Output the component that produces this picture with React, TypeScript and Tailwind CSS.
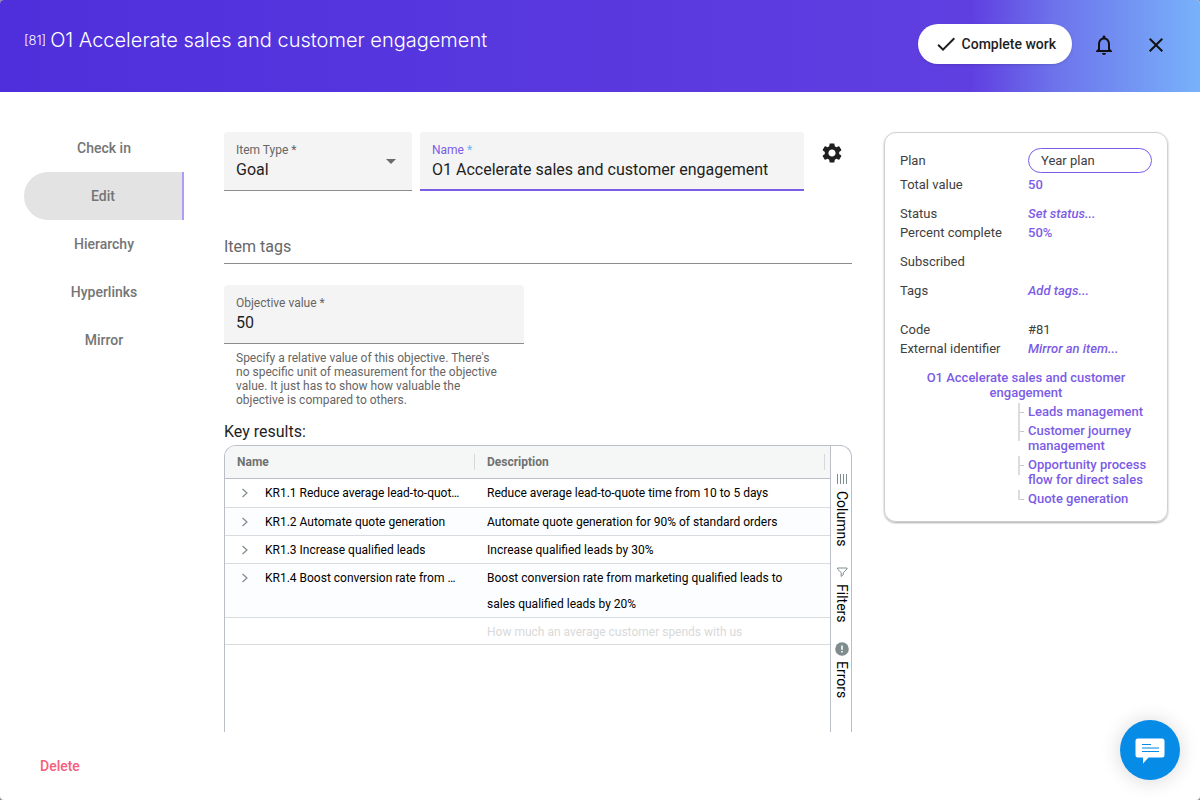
import { useState } from "react";
import type { ReactNode } from "react";
import { MdCheck, MdClose, MdNotificationsNone, MdSettings } from "react-icons/md";

const tabs = ["Check in", "Edit", "Hierarchy", "Hyperlinks", "Mirror"];

const keyResults = [
  {
    name: "KR1.1 Reduce average lead-to-quote time",
    description: "Reduce average lead-to-quote time from 10 to 5 days",
  },
  {
    name: "KR1.2 Automate quote generation",
    description: "Automate quote generation for 90% of standard orders",
  },
  {
    name: "KR1.3 Increase qualified leads",
    description: "Increase qualified leads by 30%",
  },
  {
    name: "KR1.4 Boost conversion rate from marketing",
    description:
      "Boost conversion rate from marketing qualified leads to sales qualified leads by 20%",
  },
];

const children = [
  "Leads management",
  "Customer journey management",
  "Opportunity process flow for direct sales",
  "Quote generation",
];

function Header() {
  return (
    <header className="flex h-[92px] shrink-0 items-start justify-between bg-[linear-gradient(90deg,#4e2fdb_0%,#603fe1_81%,#6d74eb_88%,#78b2fb_100%)] pl-6 pr-6 pt-6">
      <h1 className="flex items-center gap-1 font-['Inter'] text-xl font-light leading-8 text-white">
        <span className="text-[13px]">[81]</span>
        O1 Accelerate sales and customer engagement
      </h1>
      <div className="flex items-start">
        <button
          type="button"
          className="mr-3 flex h-10 items-center gap-1 rounded-full bg-white pl-4 pr-4 text-sm font-medium text-[#1f1f1f] shadow-sm"
        >
          <MdCheck className="size-6" aria-hidden="true" />
          Complete work
        </button>
        <button
          type="button"
          aria-label="Notifications"
          className="mr-3 flex h-[42px] w-10 items-center justify-center text-[#111]"
        >
          <MdNotificationsNone className="size-6" aria-hidden="true" />
        </button>
        <button
          type="button"
          aria-label="Close"
          className="flex h-[42px] w-10 items-center justify-center text-[#111]"
        >
          <MdClose className="size-6" aria-hidden="true" />
        </button>
      </div>
    </header>
  );
}

function SideNav() {
  return (
    <nav className="-mt-2 flex w-40 shrink-0 flex-col">
      {tabs.map((tab) => (
        <button
          key={tab}
          type="button"
          className={
            tab === "Edit"
              ? "h-12 rounded-l-full border-r-2 border-[#b09cf2] bg-[#e3e3e3] text-sm font-medium text-[#757575]"
              : "h-12 text-sm font-medium text-[#757575]"
          }
        >
          {tab}
        </button>
      ))}
    </nav>
  );
}

function KeyResultsTable() {
  return (
    <table className="w-full table-fixed border-collapse text-left text-xs text-black">
      <colgroup>
        <col className="w-[250px]" />
        <col className="w-[350px]" />
        <col />
      </colgroup>
      <thead>
        <tr className="h-8 border-b border-[#babfc7] bg-[#f5f7f7] text-[#6f7171]">
          <th className="p-0 font-bold">
            <div className="flex h-4 items-center border-r border-[#d5d9dc] pl-3">Name</div>
          </th>
          <th className="p-0 font-bold">
            <div className="flex h-4 items-center border-r border-[#d5d9dc] pl-3">
              Description
            </div>
          </th>
          <th className="p-0" />
        </tr>
      </thead>
      <tbody>
        {keyResults.map((row, index) => (
          <tr
            key={row.name}
            className={
              index % 2 === 1
                ? "border-b border-[#d9dcde] bg-[#fcfdfe] align-top"
                : "border-b border-[#d9dcde] align-top first:h-[29px]"
            }
          >
            <td className="p-0 pt-px">
              <div className="flex items-center pl-3 pr-3 leading-[26px]">
                <button
                  type="button"
                  aria-label="Expand row"
                  className="mr-3 flex size-4 shrink-0 items-center justify-center text-[#7f8c8d]"
                >
                  <svg viewBox="0 0 16 16" className="size-4" fill="none" stroke="currentColor" aria-hidden="true">
                    <path d="M5.5 4 10 8 5.5 12" strokeWidth="1.2" />
                  </svg>
                </button>
                <span className="truncate">{row.name}</span>
              </div>
            </td>
            <td className="px-3 pb-0 pt-px leading-[26px]">{row.description}</td>
            <td className="p-0" />
          </tr>
        ))}
        <tr className="border-b border-[#d9dcde] leading-6 text-[#d9d9d9]">
          <td className="p-0" />
          <td className="px-3 pb-0 pt-0.5">How much an average customer spends with us</td>
          <td className="p-0" />
        </tr>
      </tbody>
    </table>
  );
}

function PanelButton({ label, children }: { label: string; children: ReactNode }) {
  return (
    <button type="button" className="flex flex-col items-center gap-1">
      <span className="flex size-4 items-center justify-center text-[#7f8c8d]">{children}</span>
      <span className="text-sm leading-5 text-black [writing-mode:vertical-rl]">
        {label}
      </span>
    </button>
  );
}

function GridPanel() {
  return (
    <div className="flex w-[21px] shrink-0 flex-col items-center gap-[18px] border-l border-[#babfc7] pl-0.5 pt-[25px]">
      <PanelButton label="Columns">
        <svg viewBox="0 0 16 16" className="size-4" fill="none" stroke="currentColor" aria-hidden="true">
          <path d="M3.5 3v10M6.5 3v10M9.5 3v10M12.5 3v10" />
        </svg>
      </PanelButton>
      <PanelButton label="Filters">
        <svg viewBox="0 0 16 16" className="size-4" fill="none" stroke="currentColor" aria-hidden="true">
          <path d="M3.5 4h9.5v1L9.3 8.6v2L7.2 12.4V8.6L3.5 5z" />
        </svg>
      </PanelButton>
      <PanelButton label="Errors">
        <svg viewBox="0 0 16 16" className="size-4" aria-hidden="true">
          <circle cx="8" cy="8" r="6.8" fill="currentColor" />
          <path d="M8 4.5v4.3M8 10v1.6" stroke="#fff" strokeWidth="1.6" />
        </svg>
      </PanelButton>
    </div>
  );
}

function EditForm() {
  const [name, setName] = useState("O1 Accelerate sales and customer engagement");
  const [value, setValue] = useState("50");
  return (
    <form className="flex min-w-0 flex-1 flex-col text-[#1f1f1f]">
      <div className="flex gap-2">
        <div className="grid w-[188px] shrink-0 rounded-t border-b border-[#8c8c8c] bg-[#f4f4f4]">
          <label
            htmlFor="item-type"
            className="col-start-1 row-start-1 self-start px-3 pt-2.5 text-xs text-[#666]"
          >
            Item Type *
          </label>
          <select
            id="item-type"
            className="col-start-1 row-start-1 h-[58px] w-full appearance-none bg-transparent pb-2 pl-3 pt-[26px] text-base leading-6 outline-none"
          >
            <option>Goal</option>
          </select>
          <svg
            viewBox="0 0 10 5"
            className="pointer-events-none col-start-1 row-start-1 mr-4 h-[5px] w-2.5 self-center justify-self-end"
            aria-hidden="true"
          >
            <path d="M0 0h10L5 5z" fill="#6b6b6b" />
          </svg>
        </div>
        <div className="flex h-[59px] min-w-0 flex-1 flex-col rounded-t border-b-2 border-[#7c5ce6] bg-[#f4f4f4] px-3 pt-2.5">
          <label htmlFor="item-name" className="text-xs text-[#7c5ce6]">
            Name <span className="text-[#6fb1f5]">*</span>
          </label>
          <input
            id="item-name"
            value={name}
            onChange={(event) => setName(event.target.value)}
            className="h-6 w-full bg-transparent text-base outline-none"
          />
        </div>
        <button
          type="button"
          aria-label="Settings"
          className="mt-px flex size-10 shrink-0 items-center justify-center"
        >
          <MdSettings className="size-6" aria-hidden="true" />
        </button>
      </div>

      <input
        aria-label="Item tags"
        placeholder="Item tags"
        className="mt-[39px] h-[34px] w-full shrink-0 border-b border-[#8c8c8c] text-base outline-none placeholder:text-[#666]"
      />

      <div className="mt-[21px] flex h-[59px] w-[300px] shrink-0 flex-col rounded-t border-b border-[#8c8c8c] bg-[#f4f4f4] px-3 pt-2.5">
        <label htmlFor="objective-value" className="text-xs text-[#666]">
          Objective value *
        </label>
        <input
          id="objective-value"
          value={value}
          onChange={(event) => setValue(event.target.value)}
          className="h-6 w-full bg-transparent text-base outline-none"
        />
      </div>
      <p className="mt-[7px] w-[300px] pl-3 pr-5 text-xs leading-[14px] text-[#666]">
        Specify a relative value of this objective. There's no specific unit of measurement for the
        objective value. It just has to show how valuable the objective is compared to others.
      </p>

      <h2 className="mt-[13px] text-base leading-6">Key results:</h2>
      <div className="mt-px flex min-h-0 flex-1 overflow-hidden rounded-t-xl border border-b-0 border-[#babfc7]">
        <div className="min-w-0 flex-1">
          <KeyResultsTable />
        </div>
        <GridPanel />
      </div>
    </form>
  );
}

function Branch({ last }: { last: boolean }) {
  return (
    <svg
      viewBox="0 0 6 19"
      className="-mb-1 -mt-px h-[19px] w-1.5 shrink-0"
      fill="none"
      aria-hidden="true"
    >
      <path d={last ? "M1 0v10" : "M1 0v19"} stroke="#dcdcdc" strokeWidth="2" />
      <path d="M2 9.5h4" stroke="#c8c8c8" />
    </svg>
  );
}

function DetailsCard() {
  return (
    <aside className="w-[284px] shrink-0 self-start rounded-xl border border-[#d0d0d0] p-[15px] text-[13px] leading-[15px] text-[#404040] shadow-[0_1px_2px_rgba(0,0,0,0.35)]">
      <dl className="grid grid-cols-[128px_1fr] items-center gap-y-1">
        <dt>Plan</dt>
        <dd>
          <a
            href="#plan"
            className="flex h-[25px] items-center rounded-full border border-[#7c5ce6] px-3"
          >
            Year plan
          </a>
        </dd>
        <dt>Total value</dt>
        <dd className="font-medium text-[#7c5ce6]">50</dd>
        <dt className="mt-2.5">Status</dt>
        <dd className="mt-2.5 font-medium italic text-[#7c5ce6]">
          <a href="#status">Set status...</a>
        </dd>
        <dt>Percent complete</dt>
        <dd className="font-medium text-[#7c5ce6]">50%</dd>
        <dt className="mt-2.5">Subscribed</dt>
        <dd />
        <dt className="mt-2.5">Tags</dt>
        <dd className="mt-2.5 font-medium italic text-[#7c5ce6]">
          <a href="#tags">Add tags...</a>
        </dd>
        <dt className="mt-5">Code</dt>
        <dd className="mt-5">#81</dd>
        <dt>External identifier</dt>
        <dd className="font-medium italic text-[#7c5ce6]">
          <a href="#mirror">Mirror an item...</a>
        </dd>
      </dl>
      <div className="mt-3.5 font-medium text-[#7c5ce6]">
        <a href="#item" className="block px-6 text-center">
          O1 Accelerate sales and customer engagement
        </a>
        <ul className="mt-1 flex flex-col gap-1 pl-[118px]">
          {children.map((item, index) => (
            <li key={item} className="flex items-start gap-1">
              <Branch last={index === children.length - 1} />
              <a href="#child">{item}</a>
            </li>
          ))}
        </ul>
      </div>
    </aside>
  );
}

function ChatButton() {
  return (
    <button
      type="button"
      aria-label="Open chat"
      className="fixed bottom-5 right-5 flex size-[60px] items-center justify-center rounded-full bg-[#068be6] shadow-[0_1px_20px_rgba(0,0,0,0.16)]"
    >
      <svg viewBox="0 0 30 26" className="mt-0.5 h-[26px] w-[30px]" aria-hidden="true">
        <path
          d="M3 0.5h24a2.5 2.5 0 0 1 2.5 2.5v14a2.5 2.5 0 0 1-2.5 2.5H13.5L8 25.5v-6H3A2.5 2.5 0 0 1 .5 17V3A2.5 2.5 0 0 1 3 .5z"
          fill="#fff"
        />
        <path d="M7 6.5h9M7 13.5h17" stroke="#068be6" />
        <path d="M7 10h17" stroke="#7cc3f3" strokeWidth="2" />
      </svg>
    </button>
  );
}

export default function App() {
  return (
    <div className="h-screen bg-[#8a8a8a] font-['Roboto',sans-serif]">
      <div className="flex h-full flex-col overflow-hidden rounded bg-white">
        <Header />
        <main className="flex min-h-0 flex-1 pl-6 pr-8 pt-10">
          <SideNav />
          <div className="ml-10 flex min-w-0 flex-1 gap-8">
            <EditForm />
            <DetailsCard />
          </div>
        </main>
        <footer className="flex h-[68px] shrink-0 items-center px-6">
          <button type="button" className="h-9 px-4 text-sm font-medium text-[#f4607c]">
            Delete
          </button>
        </footer>
      </div>
      <ChatButton />
    </div>
  );
}
